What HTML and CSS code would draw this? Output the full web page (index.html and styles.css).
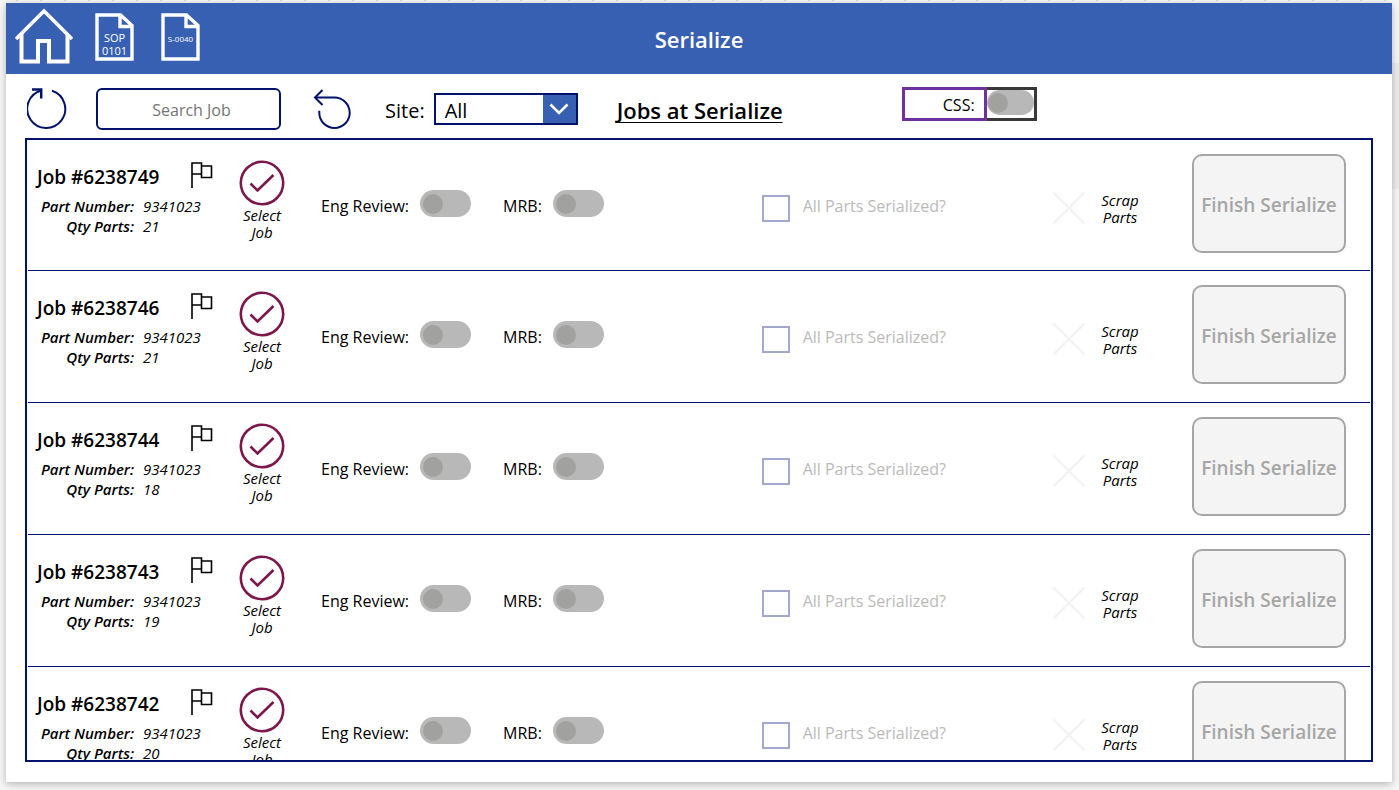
FILE: index.html
```html
<!DOCTYPE html>
<html lang="en">
<head>
<meta charset="utf-8">
<meta name="viewport" content="width=device-width, initial-scale=1">
<title>Serialize</title>
<link rel="stylesheet" href="styles.css">
</head>
<body>
<svg class="sprite" aria-hidden="true">
  <symbol id="flag" viewBox="0 0 22 26"><path d="M1 26V1h9.500v11H1M10.500 4h10v11.500h-10V4" fill="none" stroke="currentColor" stroke-width="1.6"/></symbol>
  <symbol id="tick" viewBox="0 0 46 46"><circle cx="23" cy="23" r="21.2" fill="none" stroke="currentColor" stroke-width="2.6"/><path d="M11.500 23.500l7 7L34.500 15" fill="none" stroke="currentColor" stroke-width="2.6"/></symbol>
  <symbol id="cross" viewBox="0 0 34 34"><path d="M1.500 1.500l31 31M32.500 1.500l-31 31" fill="none" stroke="currentColor" stroke-width="2.400"/></symbol>
  <symbol id="doc" viewBox="0 0 39 48"><path d="M2 2h23.500L37 12.500V46H2zM25 2v11.500h12" fill="none" stroke="currentColor" stroke-width="3.4"/></symbol>
</svg>
<main class="app">
  <header class="topbar">
    <nav class="topnav">
      <a class="home" href="#" aria-label="Home"><svg viewBox="0 0 58 56"><path d="M1 31L29 3l28 28" fill="none" stroke="currentColor" stroke-width="3.6"/><path d="M6.500 26v27.500H23V33h11v20.500h18.500V26" fill="none" stroke="currentColor" stroke-width="4"/></svg></a>
      <a class="doc" href="#"><svg><use href="#doc"/></svg><span class="doc-text">SOP 0101</span></a>
      <a class="doc" href="#"><svg><use href="#doc"/></svg><span class="doc-text doc-text-small">S-0040</span></a>
    </nav>
    <h1 class="title">Serialize</h1>
  </header>

  <section class="toolbar">
    <button class="icon-btn refresh" aria-label="Refresh"><svg viewBox="0 0 40 41"><path d="M25 2.800A19 19 0 1 1 14.500 2.500" fill="none" stroke="currentColor" stroke-width="2"/><path d="M5 1.500h9.200v9" fill="none" stroke="currentColor" stroke-width="2.500"/></svg></button>
    <input class="search" type="text" placeholder="Search Job" aria-label="Search Job">
    <button class="icon-btn undo" aria-label="Undo"><svg viewBox="0 0 38 40"><path d="M2 8.500h19.500a15.200 15.200 0 1 1-15.200 15.200v-2" fill="none" stroke="currentColor" stroke-width="2"/><path d="M9.500 1L2 8.500 9.500 16" fill="none" stroke="currentColor" stroke-width="2"/></svg></button>
    <label class="site-label" for="site">Site:</label>
    <div class="select-wrap">
      <select id="site" class="select"><option>All</option></select>
      <span class="select-arrow"><svg viewBox="0 0 20 12"><path d="M1.500 1.500L10 10l8.500-8.500" fill="none" stroke="currentColor" stroke-width="2.600"/></svg></span>
    </div>
    <h2 class="heading">Jobs at Serialize</h2>
    <div class="css-field">
      <label class="css-label" for="css">CSS:</label>
      <span class="css-box"><input id="css" class="switch switch-small" type="checkbox"></span>
    </div>
  </section>

  <ul class="jobs" id="jobs"></ul>
</main>
<div class="side-thumb"></div>
<script src="jobs.js"></script>
</body>
</html>
```

FILE: jobs.js
```js
const jobs = [
  { id: 6238749, part: 9341023, qty: 21 },
  { id: 6238746, part: 9341023, qty: 21 },
  { id: 6238744, part: 9341023, qty: 18 },
  { id: 6238743, part: 9341023, qty: 19 },
  { id: 6238742, part: 9341023, qty: 20 }
];

document.getElementById("jobs").innerHTML = jobs.map(job => `
  <li class="job">
    <div class="info">
      <h3 class="job-name">Job #${job.id}</h3>
      <dl class="facts">
        <dt>Part Number:</dt><dd>${job.part}</dd>
        <dt>Qty Parts:</dt><dd>${job.qty}</dd>
      </dl>
    </div>
    <button class="icon-btn flag" aria-label="Flag job ${job.id}"><svg><use href="#flag"/></svg></button>
    <button class="icon-btn pick"><svg><use href="#tick"/></svg><span>Select Job</span></button>
    <div class="toggle toggle-eng">
      <label for="eng-${job.id}">Eng Review:</label>
      <input id="eng-${job.id}" class="switch" type="checkbox">
    </div>
    <div class="toggle">
      <label for="mrb-${job.id}">MRB:</label>
      <input id="mrb-${job.id}" class="switch" type="checkbox">
    </div>
    <div class="all-parts">
      <input id="all-${job.id}" class="check" type="checkbox" disabled>
      <label for="all-${job.id}">All Parts Serialized?</label>
    </div>
    <button class="icon-btn scrap"><svg><use href="#cross"/></svg><span>Scrap Parts</span></button>
    <button class="finish" disabled>Finish Serialize</button>
  </li>`).join("");
```

FILE: styles.css
```css
* {
  box-sizing: border-box;
}

body {
  margin: 0;
  padding: 3px 7px 8px 6px;
  height: 100vh;
  overflow: hidden;
  background: repeating-linear-gradient(90deg, #d9d9d9 0 2px, transparent 2px 24px) 16px 0 / 100% 1px no-repeat, #f7f7f7;
  color: #000;
  font-family: "Open Sans", "Noto Sans", sans-serif;
  font-size: 16px;
}

h1, h2, h3, ul, dl, dd {
  margin: 0;
  padding: 0;
}

button, input, select {
  margin: 0;
  font: inherit;
}

svg {
  display: block;
}

.sprite {
  position: absolute;
  width: 0;
  height: 0;
}

.app {
  position: relative;
  z-index: 1;
  display: flex;
  flex-direction: column;
  height: 100%;
  background: #fff;
  box-shadow: 0 2px 8px rgba(0, 0, 0, 0.28);
}

.side-thumb {
  position: absolute;
  top: 63px;
  right: 0;
  width: 8px;
  height: 126px;
  background: #ededed;
}

.icon-btn {
  padding: 0;
  border: 0;
  background: none;
  color: #00126b;
}

/* Header */

.topbar {
  display: grid;
  grid-template-columns: 1fr auto 1fr;
  align-items: center;
  height: 71px;
  flex: none;
  padding: 0 9px;
  background: #3860b2;
  color: #fff;
}

.topnav {
  display: flex;
  align-items: center;
  padding-bottom: 3px;
}

.home {
  margin: 0 22px 2px 0;
  color: #fff;
}

.home svg {
  width: 58px;
  height: 56px;
}

.doc {
  position: relative;
  margin-right: 27px;
  color: #fff;
  text-decoration: none;
}

.doc svg {
  width: 39px;
  height: 48px;
}

.doc-text {
  position: absolute;
  inset: 18px 4px 0;
  font-size: 11px;
  line-height: 13px;
  text-align: center;
}

.doc-text-small {
  inset: 19px 0 0;
  font-size: 8px;
}

.title {
  font-size: 22px;
  font-weight: 600;
  line-height: 30px;
}

/* Toolbar */

.toolbar {
  display: flex;
  align-items: center;
  flex: none;
  height: 64px;
  padding: 6px 19px 0 21px;
}

.refresh {
  padding-bottom: 2px;
}

.refresh svg {
  width: 40px;
  height: 41px;
}

.search {
  width: 185px;
  height: 42px;
  margin: 0 32px 0 29px;
  border: 2px solid #00126b;
  border-radius: 6px;
  text-align: center;
  padding: 2px 0 0 6px;
}

.search::placeholder {
  color: #757575;
}

.undo svg {
  width: 38px;
  height: 40px;
}

.site-label {
  margin: 3px 9px 0 34px;
  font-size: 20px;
}

.select-wrap {
  position: relative;
}

.select {
  display: block;
  width: 144px;
  height: 32px;
  padding: 3px 44px 0 9px;
  appearance: none;
  border: 2px solid #00126b;
  border-radius: 0;
  background: #fff;
  color: #000;
  font-size: 20px;
  line-height: 26px;
}

.select-arrow {
  position: absolute;
  top: 2px;
  right: 2px;
  bottom: 2px;
  display: grid;
  place-items: center;
  width: 33px;
  background: #3860b2;
  color: #fff;
  pointer-events: none;
}

.select-arrow svg {
  width: 20px;
  height: 12px;
}

.heading {
  margin: 1px 0 0 39px;
  font-size: 22px;
  font-weight: 600;
  line-height: 30px;
  text-decoration: underline;
  text-decoration-skip-ink: none;
  text-decoration-thickness: 1px;
  text-underline-offset: 3px;
}

.css-field {
  display: flex;
  height: 34px;
  margin: 0 0 10px 119px;
}

.css-label {
  width: 85px;
  padding: 2px 9px 0 0;
  border: 3px solid #7030a0;
  line-height: 26px;
  text-align: right;
}

.css-box {
  width: 50px;
  border: 3px solid #383838;
  border-left: 0;
}

/* Switches and tick boxes */

.switch {
  display: block;
  width: 51px;
  height: 27px;
  flex: none;
  padding: 4px 3px;
  appearance: none;
  border-radius: 14px;
  background: #b8b8b8;
}

.switch::before {
  content: "";
  display: block;
  width: 20px;
  height: 20px;
  border-radius: 50%;
  background: #a1a1a0;
}

.switch-small {
  width: 47px;
  height: 25px;
  padding: 3px 1px;
}

.check {
  width: 28px;
  height: 27px;
  appearance: none;
  border: 2px solid #a3a7cd;
  background: #fff;
}

/* Job list */

.jobs {
  flex: 1;
  min-height: 0;
  margin: 0 19px 20px;
  padding: 0 1px;
  overflow: hidden;
  border: 2px solid #00126b;
  list-style: none;
}

.job {
  display: flex;
  align-items: flex-start;
  min-height: 132px;
  padding: 14px 24px 0 9px;
  border-bottom: 1px solid #00126b;
}

.job:first-child {
  min-height: 131px;
}

.info {
  width: 154px;
  padding-top: 9px;
  white-space: nowrap;
}

.job-name {
  font-size: 19px;
  font-weight: 600;
  line-height: 28px;
}

.facts {
  display: grid;
  grid-template-columns: 97px auto;
  column-gap: 9px;
  padding-top: 5px;
  font-size: 15px;
  font-style: italic;
  line-height: 20px;
}

.facts dt {
  font-weight: 600;
  text-align: right;
}

.flag {
  margin: 8px 19px 0 0;
  color: #000;
}

.flag svg {
  width: 22px;
  height: 26px;
}

.pick {
  width: 60px;
  padding-top: 6px;
  color: #000;
  font-size: 15px;
  font-style: italic;
  line-height: 17px;
}

.pick svg {
  width: 46px;
  height: 46px;
  margin: 0 auto 1px;
  color: #7b174a;
}

.pick span {
  display: block;
  padding: 0 5px;
}

.toggle {
  display: flex;
  padding-top: 36px;
}

.toggle label {
  padding: 3px 11px 0 0;
  line-height: 26px;
}

.toggle-eng {
  margin: 0 32px 0 29px;
}

.all-parts {
  display: flex;
  margin-left: auto;
  padding-top: 41px;
  color: #bababa;
}

.all-parts label {
  padding-left: 13px;
  line-height: 22px;
}

.scrap {
  display: flex;
  margin: 37px 42px 0 106px;
  color: #000;
  font-size: 15px;
  font-style: italic;
  line-height: 17px;
}

.scrap svg {
  width: 34px;
  height: 34px;
  color: #f3f3f3;
}

.scrap span {
  width: 60px;
  margin: 1px 0 0 4px;
  padding: 0 8px;
}

.finish {
  width: 154px;
  height: 99px;
  padding: 2px 0 0;
  border: 2px solid #a6a6a6;
  border-radius: 10px;
  background: #f4f4f4;
  color: #a6a6a6;
  font-size: 19px;
  font-weight: 600;
  white-space: nowrap;
}
```
